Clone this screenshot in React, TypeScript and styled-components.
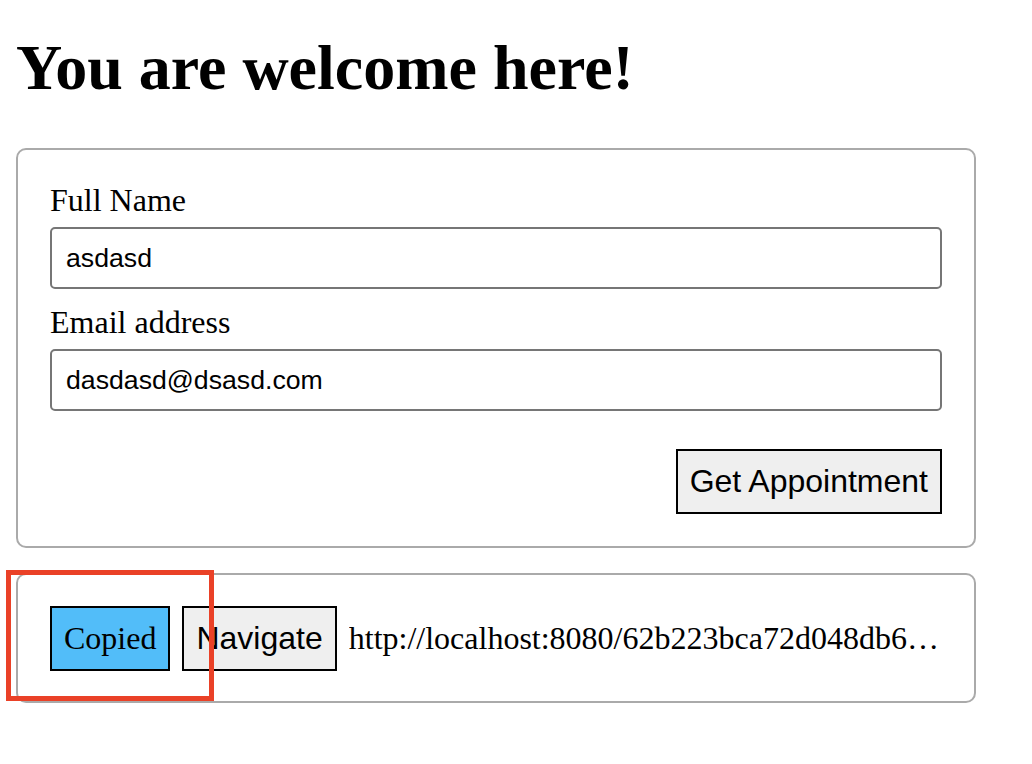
import React from "react";
import styled, { createGlobalStyle } from "styled-components";

const GlobalStyle = createGlobalStyle`
  html, body { margin: 0; padding: 0; background: #ffffff; }
  body { font-family: "Liberation Serif", "Times New Roman", serif; color: #000; }
`;

const Page = styled.div`
  position: relative;
  padding: 32px 56px 0 16px;
  width: 960px;
`;

const Heading = styled.h1`
  font-family: "Liberation Serif", "Times New Roman", serif;
  font-size: 64px;
  font-weight: bold;
  margin: 0 0 45px;
  line-height: 71px;
`;

const Card = styled.div<{ $row?: boolean }>`
  border: 2px solid #aaaaaa;
  border-radius: 10px;
  padding: ${(p) => (p.$row ? "31px 32px 30px" : "32px")};
  display: flex;
  flex-direction: ${(p) => (p.$row ? "row" : "column")};
  align-items: ${(p) => (p.$row ? "center" : "stretch")};
  gap: ${(p) => (p.$row ? "12px" : "0")};
  & + & {
    margin-top: 25px;
  }
`;

const Field = styled.div<{ $first?: boolean }>`
  display: flex;
  flex-direction: column;
  margin-top: ${(p) => (p.$first ? "0" : "15px")};
`;

const Label = styled.label`
  font-family: "Liberation Serif", "Times New Roman", serif;
  font-size: 32px;
  line-height: 36px;
  margin-bottom: 9px;
`;

const Input = styled.input`
  box-sizing: border-box;
  height: 62px;
  border: 2px solid #767676;
  border-radius: 5px;
  padding: 0 14px;
  font-family: "Liberation Sans", Arial, sans-serif;
  font-size: 26.67px;
  color: #000;
  outline: none;
`;

const Actions = styled.div`
  display: flex;
  justify-content: flex-end;
  margin-top: 38px;
`;

const Button = styled.button<{ $variant?: "copied" | "plain" }>`
  border: 2px solid #000;
  border-radius: 0;
  background: ${(p) => (p.$variant === "copied" ? "#52bdf9" : "#efefef")};
  font-family: ${(p) =>
    p.$variant === "copied"
      ? `"Liberation Serif", "Times New Roman", serif`
      : `"Liberation Sans", Arial, sans-serif`};
  font-size: 32px;
  line-height: 37px;
  padding: 12px;
  color: #000;
  flex-shrink: 0;
  cursor: pointer;
`;

const Url = styled.span`
  font-family: "Liberation Serif", "Times New Roman", serif;
  font-size: 32px;
  white-space: nowrap;
  overflow: hidden;
  text-overflow: ellipsis;
  min-width: 0;
  flex: 1;
`;

const Highlight = styled.div`
  position: absolute;
  left: 6px;
  top: 570px;
  width: 198px;
  height: 121px;
  border: 5px solid #ea4127;
  pointer-events: none;
`;

export default function App() {
  return (
    <>
      <GlobalStyle />
      <Page>
        <Heading>You are welcome here!</Heading>
        <Card>
          <Field $first>
            <Label>Full Name</Label>
            <Input defaultValue="asdasd" />
          </Field>
          <Field>
            <Label>Email address</Label>
            <Input defaultValue="dasdasd@dsasd.com" />
          </Field>
          <Actions>
            <Button>Get Appointment</Button>
          </Actions>
        </Card>
        <Card $row>
          <Button $variant="copied">Copied</Button>
          <Button>Navigate</Button>
          <Url>http://localhost:8080/62b223bca72d048db6a9f1c3e</Url>
        </Card>
        <Highlight />
      </Page>
    </>
  );
}
